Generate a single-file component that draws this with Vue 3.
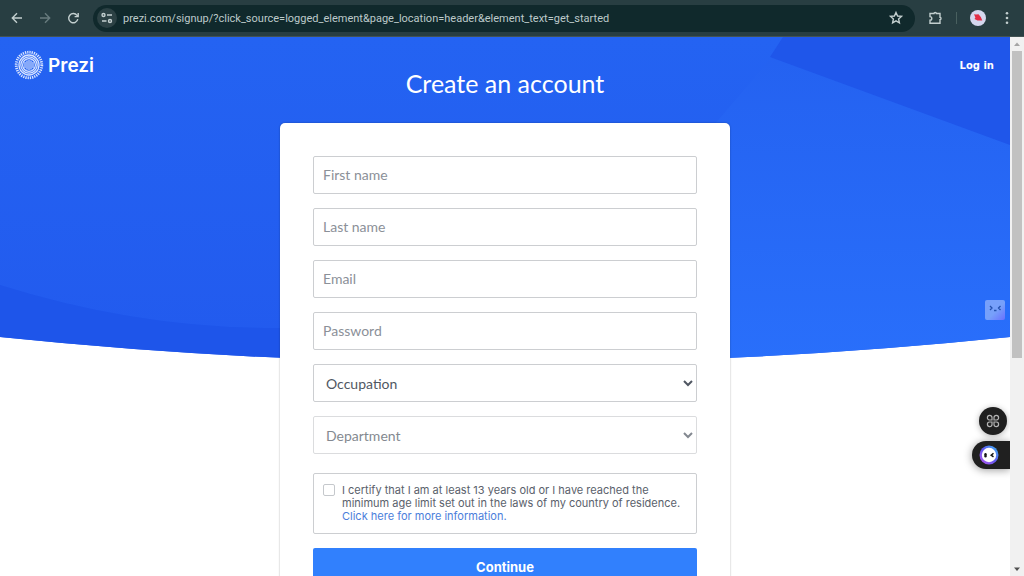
<script setup>
import { ref } from 'vue'

const fields = [
  { id: 'first', label: 'First name', type: 'text' },
  { id: 'last', label: 'Last name', type: 'text' },
  { id: 'email', label: 'Email', type: 'email' },
  { id: 'password', label: 'Password', type: 'password' },
]
const form = ref({ first: '', last: '', email: '', password: '' })
const url = ref('prezi.com/signup/?click_source=logged_element&page_location=header&element_text=get_started')
</script>

<template>
  <div class="window">
    <header class="toolbar">
      <button class="tool" aria-label="Back">
        <svg viewBox="0 0 16 16" width="16" height="16"><path d="M13 8H3.5M8 3.3 3.3 8 8 12.7" /></svg>
      </button>
      <button class="tool faded" aria-label="Forward">
        <svg viewBox="0 0 16 16" width="16" height="16"><path d="M3 8h9.5M8 3.3 12.7 8 8 12.7" /></svg>
      </button>
      <button class="tool" aria-label="Reload">
        <svg viewBox="0 0 16 16" width="16" height="16"><path d="M12.8 9.2A4.600 4.600 0 1 1 12 5.400L12.900 6.300M13.200 3V6.600H9.600" /></svg>
      </button>
      <div class="address">
        <button class="site" aria-label="Site information">
          <svg viewBox="0 0 14 14" width="14" height="14"><circle cx="3.500" cy="4" r="1.500" /><path d="M7 4h5M2 10h4.500" /><circle cx="10" cy="10" r="1.500" /></svg>
        </button>
        <input v-model="url" class="url" aria-label="Address" />
        <button class="star" aria-label="Bookmark">
          <svg viewBox="0 0 16 16" width="16" height="16"><path d="m8 2.500 1.600 3.500 3.900.4-2.900 2.600.8 3.900L8 10.900l-3.400 2 .8-3.900-2.900-2.600 3.900-.4z" /></svg>
        </button>
      </div>
      <div class="extras">
        <button class="tool" aria-label="Extensions">
          <svg viewBox="0 0 16 16" width="16" height="16"><path d="M3 3.500h4a1.200 1 0 0 1 2.400 0h3.600v3.700a1 1.200 0 0 1 0 2.400v3.600H3v-3a1.800 1.800 0 0 0 0-3.600z" /></svg>
        </button>
        <span class="divider"></span>
        <button class="tool" aria-label="Profile">
          <svg viewBox="0 0 16 16" width="16" height="16"><circle class="avatar" cx="8" cy="8" r="8" /><path class="bird" d="M4 4.200 6 4.600 8.500 4.200 10.800 7l1.500 3.500-4.800-.1-3-1.400.9-1.600z" /></svg>
        </button>
        <button class="tool" aria-label="Menu">
          <svg class="solid" viewBox="0 0 16 16" width="16" height="16"><circle cx="8" cy="3.300" r="1.300" /><circle cx="8" cy="8" r="1.300" /><circle cx="8" cy="12.700" r="1.300" /></svg>
        </button>
      </div>
    </header>

    <div class="viewport">
      <div class="page">
        <svg class="backdrop" viewBox="0 0 1010 326" preserveAspectRatio="none" aria-hidden="true">
          <defs>
            <linearGradient id="base" x1="0" y1="0" x2="0" y2="1">
              <stop offset="0" stop-color="#2463f2" />
              <stop offset="1" stop-color="#225aee" />
            </linearGradient>
            <linearGradient id="side" x1="0" y1="0" x2="0" y2="1">
              <stop offset="0" stop-color="#2461f0" />
              <stop offset="1" stop-color="#296ffb" />
            </linearGradient>
            <clipPath id="hero"><path d="M0 0H1010V300Q505 352 0 300Z" /></clipPath>
          </defs>
          <g clip-path="url(#hero)">
            <rect width="1010" height="326" fill="url(#base)" />
            <path d="M0 248Q140 292 280 291L505 280V326H0Z" fill="#1e55ea" />
            <path d="M783 0 772 20 720 81 505 326H1010V0Z" fill="url(#side)" />
            <path d="M783 0 770 20 1010 108V0Z" fill="#1f56ea" />
          </g>
        </svg>

        <nav class="topbar">
          <a class="brand" href="#">
            <svg viewBox="0 0 30 30" width="30" height="30" aria-hidden="true">
              <circle cx="15" cy="15" r="12.800" stroke-width="2.800" stroke-dasharray="1.300 0.934" />
              <circle cx="15" cy="15" r="10" stroke-width="1.300" />
              <circle cx="15" cy="15" r="8.200" stroke-width="1.200" />
              <circle cx="15" cy="15" r="6.400" stroke-width="1.200" />
              <path d="M11 12v6M13 10.500v9M15 10v10M17 10.500v9M19 12v6" stroke-width="1.100" />
            </svg>
            <span>Prezi</span>
          </a>
          <a class="login" href="#">Log in</a>
        </nav>

        <main>
          <h1>Create an account</h1>
          <form class="card" @submit.prevent>
            <input
              v-for="f in fields"
              :key="f.id"
              v-model="form[f.id]"
              class="field"
              :type="f.type"
              :placeholder="f.label"
              :aria-label="f.label"
            />
            <select class="field" aria-label="Occupation"><option>Occupation</option></select>
            <select class="field" aria-label="Department" disabled><option>Department</option></select>
            <div class="certify">
              <input id="age" type="checkbox" />
              <div>
                <label for="age">I certify that I am at least 13 years old or I have reached the minimum age limit set out in the laws of my country of residence.</label>
                <a href="#">Click here for more information.</a>
              </div>
            </div>
            <button class="submit">Continue</button>
          </form>
        </main>

        <button class="buddy" aria-label="Assistant">
          <svg viewBox="0 0 20 20" width="20" height="20">
            <defs><linearGradient id="tile" x1="0" y1="0" x2="1" y2="1"><stop offset=".55" stop-color="#77a0fa" /><stop offset="1" stop-color="#6970ff" /></linearGradient></defs>
            <rect width="20" height="20" rx="2" fill="url(#tile)" />
            <path d="m5 6 2 2-2 2M15.500 6l-2 2 2 2M9 10.500h2.500" fill="none" stroke="#2450ad" stroke-width="1.300" />
          </svg>
        </button>

        <div class="widgets">
          <button class="apps" aria-label="Apps">
            <svg viewBox="0 0 14 14" width="14" height="14">
              <path d="M6 6H3.500A2.300 2.300 0 1 1 6 3.500zM8 6V3.500A2.300 2.300 0 1 1 10.500 6zM6 8v2.500A2.300 2.300 0 1 1 3.500 8zM8 8h2.500A2.300 2.300 0 1 1 8 10.500z" />
            </svg>
          </button>
          <button class="bot" aria-label="Chat">
            <svg viewBox="0 0 20 20" width="20" height="20">
              <defs><linearGradient id="ring" x1="0" y1="1" x2="1" y2="0"><stop offset="0" stop-color="#b855ed" /><stop offset=".5" stop-color="#6259ef" /><stop offset="1" stop-color="#37b9f2" /></linearGradient></defs>
              <circle cx="10" cy="10" r="9.500" fill="url(#ring)" />
              <circle cx="10" cy="10" r="7.200" fill="#fff" />
              <path d="M6.500 9.200v2" stroke="#151515" stroke-width="2.400" stroke-linecap="round" />
              <path d="m14.500 8.200-2.300 2 2.300 1.600" fill="none" stroke="#151515" stroke-width="1.500" />
            </svg>
          </button>
        </div>
      </div>

      <div class="scrollbar" aria-hidden="true">
        <svg viewBox="0 0 14 14" width="14" height="14"><path d="m4 9 3-3.500 3 3.500z" fill="#a5a5a5" /></svg>
        <div class="track"><div class="thumb"></div></div>
        <svg viewBox="0 0 14 14" width="14" height="14"><path d="m4 5.500 3 3.500 3-3.500z" fill="#505050" /></svg>
      </div>
    </div>
  </div>
</template>

<style>
body { background: #fff; }
</style>

<style scoped>
* { box-sizing: border-box; }
.window { height: 100vh; display: flex; flex-direction: column; overflow: hidden; font-family: Lato, "Liberation Sans", sans-serif; font-variant-ligatures: none; }
button { border: 0; padding: 0; background: none; font: inherit; cursor: pointer; }
svg { display: block; }
a { text-decoration: none; }

.toolbar { flex: none; height: 37px; padding: 0 9px; display: flex; align-items: center; gap: 12px; background: #283e42; border-bottom: 1px solid #435353; }
.toolbar svg { fill: none; stroke: #c3cfcf; stroke-width: 1.4; }
.toolbar .faded svg { stroke: #687b7e; }
.toolbar .solid { fill: #c3cfcf; stroke: none; }
.toolbar .avatar { fill: #d5d7ee; stroke: none; }
.toolbar .bird { fill: #e22d46; stroke: none; }
.address { flex: 1; height: 27px; display: flex; align-items: center; gap: 6px; padding: 0 11px 0 4px; border-radius: 14px; background: #10292c; }
.site { width: 20px; height: 20px; border-radius: 50%; background: #2c4144; display: grid; place-items: center; }
.url { flex: 1; min-width: 0; padding: 0; border: 0; background: none; color: #bdcaca; font: 11px Roboto, sans-serif; }
.extras { display: flex; align-items: center; gap: 13px; }
.divider { width: 1px; height: 12px; background: #49605f; }

.viewport { flex: 1; min-height: 0; display: flex; }
.page { flex: 1; min-width: 0; position: relative; overflow: hidden; background: #fff; }
.backdrop { position: absolute; top: 0; left: 0; width: 100%; height: 326px; }
.topbar { position: absolute; top: 13px; left: 14px; right: 16px; display: flex; align-items: center; justify-content: space-between; color: #fff; z-index: 1; }
.brand { display: flex; align-items: center; gap: 4px; color: #fff; font: 600 19px Inter, sans-serif; }
.brand svg { fill: none; stroke: #d8e4ff; }
.login { color: #fff; font: 700 10px "DejaVu Sans", sans-serif; }

main { position: relative; display: flex; flex-direction: column; align-items: center; padding-top: 30px; }
h1 { margin: 0 0 24px; color: #fff; font-size: 25px; line-height: 32px; font-weight: 400; }
.card { width: 100%; max-width: 450px; padding: 33px; display: flex; flex-direction: column; gap: 14px; background: #fff; border-radius: 5px; box-shadow: 0 0 2px rgba(0, 0, 0, .35); }
.field { width: 100%; height: 38px; padding: 0 9px 2px; border: 1px solid #ccced1; border-radius: 2px; background: #fff; color: #525963; font: 14px Lato, sans-serif; outline: 0; }
.field::placeholder { color: #8b9098; opacity: 1; }
select.field { padding: 0 0 0 8px; color: #505762; }
select.field:disabled { color: #505762; opacity: .7; }
.certify { display: flex; align-items: flex-start; gap: 7px; margin-top: 5px; padding: 10px 9px; border: 1px solid #ccced1; border-radius: 2px; color: #5a616b; font: 11px/13px Inter, sans-serif; }
.certify input { flex: none; appearance: none; width: 12px; height: 12px; margin: 0; border: 1px solid #c5c8cc; border-radius: 2px; background: #fff; }
.certify label, .certify a { display: block; }
.certify a { color: #4b7edb; }
.submit { height: 38px; border-radius: 2px; background: #3180fd; color: #fff; font: 700 13px Inter, sans-serif; }

.buddy { position: absolute; right: 5px; top: 263px; }
.widgets { position: absolute; right: 0; top: 370px; display: flex; flex-direction: column; align-items: flex-end; gap: 6px; }
.apps { width: 28px; height: 28px; margin-right: 3px; border-radius: 50%; background: #202020; display: grid; place-items: center; box-shadow: 0 1px 6px rgba(0, 0, 0, .3); }
.apps svg { fill: none; stroke: #b5b5b5; stroke-width: 1.2; }
.bot { width: 38px; height: 28px; padding-left: 7px; border-radius: 14px 0 0 14px; background: #202020; display: flex; align-items: center; box-shadow: 0 1px 8px rgba(0, 0, 0, .4); }

.scrollbar { flex: none; width: 14px; display: flex; flex-direction: column; background: #f1f1f1; }
.track { flex: 1; padding: 0 2px; }
.thumb { height: 60%; background: #c1c1c1; }
</style>
